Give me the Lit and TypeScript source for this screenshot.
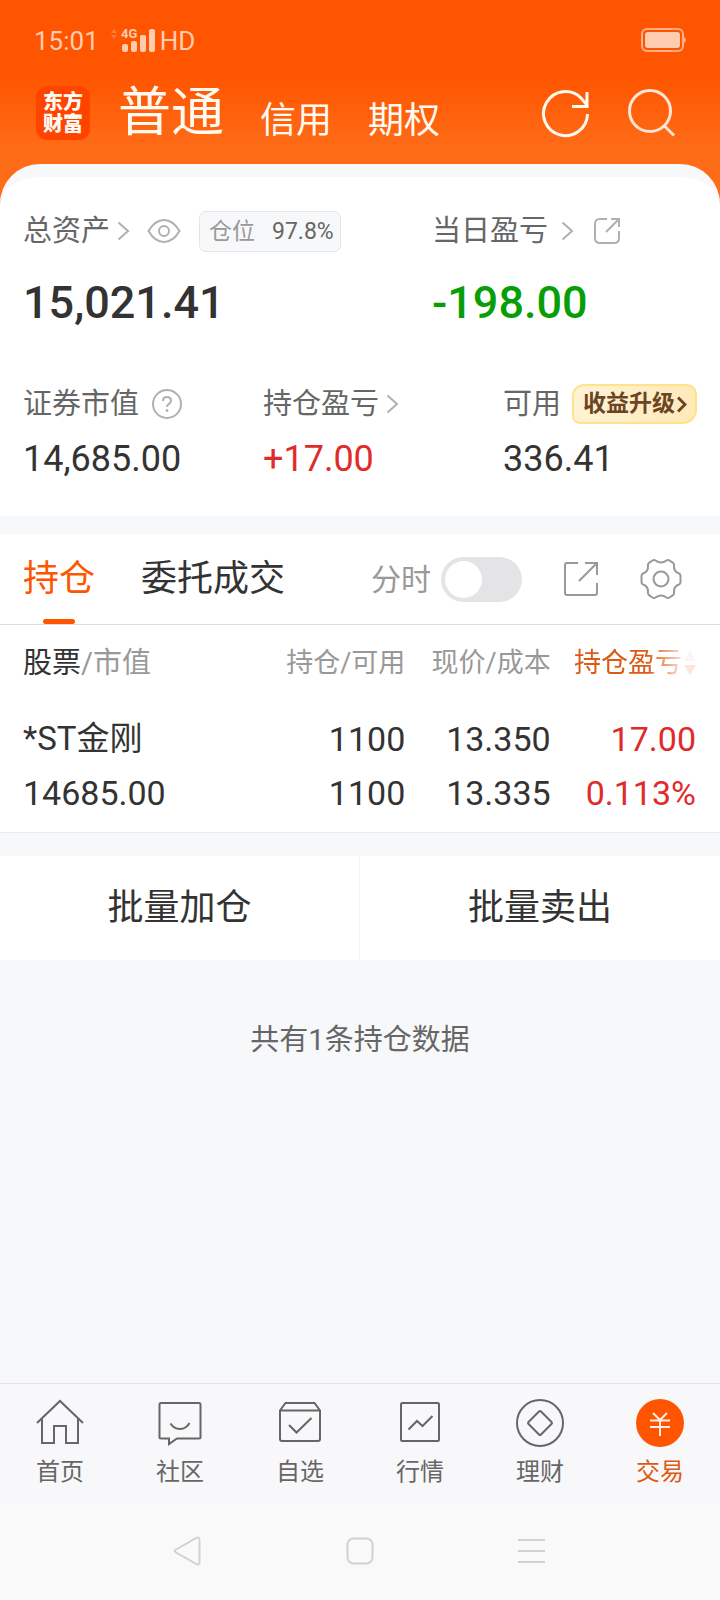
import { LitElement, html, css, svg } from "lit";
import { customElement, property, state } from "lit/decorators.js";
import { classMap } from "lit/directives/class-map.js";

interface Holding {
  name: string;
  marketValue: string;
  quantity: string;
  available: string;
  price: string;
  cost: string;
  profit: string;
  ratio: string;
}

const HOLDINGS: Holding[] = [
  {
    name: "*ST金刚",
    marketValue: "14685.00",
    quantity: "1100",
    available: "1100",
    price: "13.350",
    cost: "13.335",
    profit: "17.00",
    ratio: "0.113%",
  },
];

const chevron = html`<svg class="chevron" width="13" height="20" viewBox="0 0 13 20" aria-hidden="true">
  <path d="M1.5 1.5 L11 10 L1.5 18.5" fill="none" stroke="currentColor" stroke-width="2" />
</svg>`;

@customElement("status-bar")
class StatusBar extends LitElement {
  static styles = css`
    :host {
      display: flex;
      align-items: center;
      height: 80px;
      padding: 0 34px;
      color: #ffccb0;
      font-size: 26px;
      line-height: 32px;
    }
    .time {
      padding-top: 2px;
    }
    .signal {
      margin-left: 11px;
    }
    .hd {
      margin-left: 4px;
      padding-top: 1px;
    }
    .battery {
      margin-left: auto;
    }
    .tiny {
      font: 700 13px Roboto, sans-serif;
    }
  `;

  render() {
    return html`
      <span class="time">15:01</span>
      <svg class="signal" width="46" height="26" viewBox="0 0 46 26" fill="currentColor" aria-hidden="true">
        <path d="M1 6 L4 2 L7 6z M1 8 L4 12 L7 8z" opacity=".35" />
        <text class="tiny" x="11" y="11">4G</text>
        <rect x="12" y="17" width="6" height="8" rx="2" />
        <rect x="21" y="14" width="6" height="11" rx="2" />
        <rect x="30" y="8" width="6" height="17" rx="2" />
        <rect x="39" y="2" width="6" height="23" rx="2" />
      </svg>
      <span class="hd">HD</span>
      <svg class="battery" width="45" height="24" viewBox="0 0 45 24" aria-label="电量">
        <rect x="1" y="1" width="41" height="22" rx="5" fill="none" stroke="#ffb088" stroke-width="2" />
        <rect x="4" y="4" width="35" height="16" rx="3" fill="#ffccb0" />
        <path d="M43 9 q2 1 2 3 t-2 3z" fill="#ffb088" />
      </svg>
    `;
  }
}

@customElement("app-header")
class AppHeader extends LitElement {
  static styles = css`
    :host {
      display: flex;
      align-items: center;
      height: 84px;
      padding: 0 43px 18px 36px;
      box-sizing: border-box;
      color: #fffaf2;
    }
    button {
      border: 0;
      padding: 0;
      background: none;
      color: inherit;
      font: inherit;
      cursor: pointer;
    }
    .logo {
      display: grid;
      place-content: center;
      width: 54px;
      height: 54px;
      border-radius: 11px;
      background: #ff4400;
      font-size: 20px;
      font-weight: 900;
      line-height: 22px;
      text-align: center;
    }
    .accounts {
      display: flex;
      align-items: flex-end;
      gap: 36px;
      margin-left: 28px;
    }
    .account {
      font-size: 36px;
      line-height: 44px;
    }
    .account.current {
      font-size: 53px;
      line-height: 60px;
    }
    .actions {
      display: flex;
      gap: 36px;
      margin-left: auto;
    }
    .actions button {
      display: flex;
    }
  `;

  render() {
    return html`
      <div class="logo"><span>东方</span><span>财富</span></div>
      <div class="accounts">
        <button class="account current">普通</button>
        <button class="account">信用</button>
        <button class="account">期权</button>
      </div>
      <div class="actions">
        <button aria-label="刷新">
          <svg width="50" height="50" viewBox="0 0 50 50" fill="none" stroke="currentColor" stroke-width="3">
            <path d="M46.500 26 A22 22 0 1 1 40 10 L46 17" />
            <path d="M46 4 V18.500 H31" />
          </svg>
        </button>
        <button aria-label="搜索">
          <svg width="50" height="50" viewBox="0 0 50 50" fill="none" stroke="#ffe6d4" stroke-width="3">
            <circle cx="23" cy="23" r="20.500" />
            <path d="M37 37.500 L47 47.500" />
          </svg>
        </button>
      </div>
    `;
  }
}

@customElement("asset-summary")
class AssetSummary extends LitElement {
  static styles = css`
    :host {
      display: block;
      border-top: 13px solid #f7f8fa;
      border-radius: 40px 40px 0 0;
      background: #fff;
      padding: 33px 0 37px;
      color: #333;
    }
    button {
      border: 0;
      padding: 0;
      background: none;
      color: inherit;
      font: inherit;
      cursor: pointer;
    }
    .main {
      display: grid;
      grid-template-columns: 60% 40%;
    }
    .main > :first-child,
    .details > div {
      padding-left: 23px;
    }
    .details {
      display: grid;
      grid-template-columns: repeat(3, 1fr);
      margin-top: 53px;
    }
    .label {
      display: flex;
      align-items: center;
      height: 42px;
      color: #666;
      font-size: 29px;
      line-height: 42px;
      white-space: nowrap;
    }
    .link {
      display: flex;
      align-items: center;
      gap: 7px;
    }
    .link.wide {
      gap: 13px;
    }
    .chevron,
    .icon {
      color: #b0b0b0;
    }
    .icon {
      display: flex;
      margin-left: 17px;
    }
    .help {
      display: flex;
      margin-left: 12px;
      color: #b0b0b0;
    }
    .position {
      display: flex;
      gap: 17px;
      margin-left: 18px;
      padding: 0 6px 0 9px;
      border: 1px solid #e4e5e8;
      border-radius: 7px;
      background: #f7f8fa;
      font-size: 23px;
      line-height: 39px;
    }
    .position span {
      color: #999;
    }
    .value {
      margin-top: 14px;
      font-size: 36px;
      line-height: 40px;
    }
    .value.large {
      margin-top: 22px;
      font-size: 45px;
      font-weight: 500;
      line-height: 58px;
      height: 56px;
    }
    .down {
      color: #089e08;
    }
    .up {
      color: #e02b2b;
    }
    .upgrade {
      display: flex;
      align-items: center;
      gap: 2px;
      margin-left: 11px;
      padding: 0 8px 0 9px;
      height: 40px;
      border: 2px solid #fde48a;
      border-radius: 12px 10px 14px 8px;
      background: linear-gradient(100deg, #fff3d6, #ffe9b8);
      color: #6b4423;
      font-size: 23px;
      font-weight: 700;
      line-height: 36px;
    }
  `;

  @state() private masked = false;

  private show(value: string) {
    return this.masked ? "****" : value;
  }

  render() {
    return html`
      <div class="main">
        <div>
          <div class="label">
            <button class="link">总资产 ${chevron}</button>
            <button class="icon" aria-label="隐藏金额" @click=${() => (this.masked = !this.masked)}>
              <svg width="34" height="26" viewBox="0 0 34 26" fill="none" stroke="currentColor" stroke-width="2">
                <path d="M1.500 13 Q8 2 17 2 T32.500 13 Q26 24 17 24 T1.500 13z" />
                <circle cx="17" cy="13" r="5" />
              </svg>
            </button>
            <div class="position"><span>仓位</span>97.8%</div>
          </div>
          <div class="value large">${this.show("15,021.41")}</div>
        </div>
        <div>
          <div class="label">
            <button class="link wide">当日盈亏 ${chevron}</button>
            <button class="icon" aria-label="分享">
              <svg width="32" height="30" viewBox="0 0 32 30" fill="none" stroke="currentColor" stroke-width="2">
                <path d="M16 3 H9 Q4 3 4 8 V22 Q4 27 9 27 H23 Q28 27 28 22 V15" />
                <path d="M15 16 L27.500 3.500 M20 3 H28 V11" />
              </svg>
            </button>
          </div>
          <div class="value large down">${this.show("-198.00")}</div>
        </div>
      </div>
      <div class="details">
        <div>
          <div class="label">
            证券市值
            <button class="help" aria-label="说明">
              <svg width="32" height="32" viewBox="0 0 32 32" fill="none" stroke="currentColor" stroke-width="2">
                <circle cx="16" cy="16" r="14" />
                <path d="M12 13 V12.500 Q12 9 16 9 T20 12.500 Q20 14.500 18 15.800 T16 19" />
                <circle cx="16" cy="22.500" r="1" fill="currentColor" stroke-width="1" />
              </svg>
            </button>
          </div>
          <div class="value">${this.show("14,685.00")}</div>
        </div>
        <div>
          <div class="label"><button class="link">持仓盈亏 ${chevron}</button></div>
          <div class="value up">${this.show("+17.00")}</div>
        </div>
        <div>
          <div class="label">
            可用
            <button class="upgrade">
              收益升级
              <svg width="10" height="17" viewBox="0 0 10 17" fill="none" stroke="currentColor" stroke-width="3">
                <path d="M1 1.500 L8 8.500 L1 15.500" />
              </svg>
            </button>
          </div>
          <div class="value">${this.show("336.41")}</div>
        </div>
      </div>
    `;
  }
}

@customElement("holdings-panel")
class HoldingsPanel extends LitElement {
  static styles = css`
    :host {
      display: block;
      background: #fff;
      border-bottom: 1px solid #ececee;
      color: #333;
    }
    button {
      border: 0;
      padding: 0;
      background: none;
      color: inherit;
      font: inherit;
      cursor: pointer;
    }
    .toolbar {
      display: flex;
      align-items: center;
      height: 90px;
      padding: 0 38px 0 23px;
      border-bottom: 1px solid #dedee0;
    }
    .tabs {
      display: flex;
      gap: 46px;
      height: 100%;
      font-size: 36px;
      line-height: 44px;
    }
    .tab {
      position: relative;
    }
    .tab.active {
      color: #ff5500;
    }
    .tab.active::after {
      content: "";
      position: absolute;
      left: 50%;
      bottom: 0;
      width: 32px;
      height: 5px;
      margin-left: -16px;
      border-radius: 3px;
      background: #ff5500;
    }
    .tools {
      display: flex;
      align-items: center;
      gap: 41px;
      margin-left: auto;
      color: #999;
    }
    .tools button {
      display: flex;
    }
    .switch {
      display: flex;
      align-items: center;
      gap: 10px;
      font-size: 30px;
      line-height: 45px;
    }
    .switch input {
      appearance: none;
      display: flex;
      align-items: center;
      width: 81px;
      height: 45px;
      margin: 0;
      padding: 0 4px;
      border-radius: 23px;
      background: #e4e4e6;
    }
    .switch input::before {
      content: "";
      width: 37px;
      height: 37px;
      border-radius: 50%;
      background: #fff;
    }
    .switch input:checked {
      justify-content: flex-end;
      background: #ff5500;
    }
    .wrap {
      padding: 0 24px 0 23px;
    }
    table {
      width: 100%;
      border-collapse: collapse;
      table-layout: fixed;
    }
    th,
    td {
      padding: 0;
      text-align: right;
      white-space: nowrap;
    }
    th:first-child,
    td:first-child {
      text-align: left;
    }
    th {
      height: 76px;
      color: #999;
      font-size: 27px;
      font-weight: 400;
      line-height: 40px;
    }
    th:first-child {
      font-size: 29px;
    }
    th b {
      color: #333;
      font-weight: 400;
    }
    .num {
      width: 21.6%;
    }
    td {
      padding: 11px 0 12px;
      font-size: 34px;
      line-height: 54px;
    }
    .name {
      font-size: 33px;
    }
    .up {
      color: #e02b2b;
    }
    .sort {
      display: inline-flex;
      align-items: center;
      gap: 2px;
      color: #dd5a14;
      mask-image: linear-gradient(90deg, #000 60%, rgba(0, 0, 0, 0.15) 90%);
    }
  `;

  @property({ attribute: false }) holdings: Holding[] = [];
  @state() private tab = "持仓";

  render() {
    return html`
      <div class="toolbar">
        <div class="tabs">
          ${["持仓", "委托成交"].map(
            (name) => html`<button
              class=${classMap({ tab: true, active: name === this.tab })}
              @click=${() => (this.tab = name)}
            >${name}</button>`
          )}
        </div>
        <div class="tools">
          <label class="switch">分时<input type="checkbox" /></label>
          <button aria-label="分享">
            <svg width="36" height="36" viewBox="0 0 36 36" fill="none" stroke="currentColor" stroke-width="2">
              <path d="M15 2 H4 Q2 2 2 4 V32 Q2 34 4 34 H32 Q34 34 34 32 V22" />
              <path d="M16 20 L33 3 M22 2 H34 V14" />
            </svg>
          </button>
          <button aria-label="设置">
            <svg width="42" height="42" viewBox="0 0 42 42" fill="none" stroke="currentColor" stroke-width="2" stroke-linejoin="round">
              <path d="M12.500 2.500 Q14 1.500 15.500 2.500 Q21 6.500 26.500 2.500 Q28 1.500 29.500 2.500 L33 4.800 Q34 5.500 34 7 Q33.500 14 39 15.500 Q40.500 16 40.500 18 V24 Q40.500 26 39 26.500 Q33.500 28 34 35 Q34 36.500 33 37.200 L29.500 39.500 Q28 40.500 26.500 39.500 Q21 35.500 15.500 39.500 Q14 40.500 12.500 39.500 L9 37.200 Q8 36.500 8 35 Q8.500 28 3 26.500 Q1.500 26 1.500 24 V18 Q1.500 16 3 15.500 Q8.500 14 8 7 Q8 5.500 9 4.800z" />
              <circle cx="21" cy="21" r="7.500" />
            </svg>
          </button>
        </div>
      </div>
      <div class="wrap">
        <table>
          <thead>
            <tr>
              <th scope="col"><b>股票</b>/市值</th>
              <th scope="col" class="num">持仓/可用</th>
              <th scope="col" class="num">现价/成本</th>
              <th scope="col" class="num">
                <button class="sort">
                  持仓盈亏
                  <svg width="12" height="26" viewBox="0 0 12 26" aria-hidden="true">
                    <path d="M0 11 L6 1 L12 11z" fill="#c4c4c4" />
                    <path d="M0 15 L6 25 L12 15z" fill="#ff5500" />
                  </svg>
                </button>
              </th>
            </tr>
          </thead>
          <tbody>
            ${this.holdings.map(
              (h) => html`<tr>
                <td><div class="name">${h.name}</div><div>${h.marketValue}</div></td>
                <td><div>${h.quantity}</div><div>${h.available}</div></td>
                <td><div>${h.price}</div><div>${h.cost}</div></td>
                <td class="up"><div>${h.profit}</div><div>${h.ratio}</div></td>
              </tr>`
            )}
          </tbody>
        </table>
      </div>
    `;
  }
}

const NAV_ITEMS = [
  {
    label: "首页",
    icon: svg`<path d="M1 24 L24 2 L47 24 M6 20 V44 H18 V27 H30 V44 H42 V20" />`,
  },
  {
    label: "社区",
    icon: svg`<path d="M5 4 H43 Q44.500 4 44.500 5.500 V38 Q44.500 39.500 43 39.500 H21 L13 45 V39.500 H5 Q3.500 39.500 3.500 38 V5.500 Q3.500 4 5 4z" /><path d="M14.500 24.500 Q18 30 24 30 T33.500 24" />`,
  },
  {
    label: "自选",
    icon: svg`<path d="M4 11.500 L9.500 4 H38.500 L44 11.500 V40 Q44 42 42 42 H6 Q4 42 4 40z M4 11.500 H44" /><path d="M13 26 L20.500 33.500 L35.500 19" />`,
  },
  {
    label: "行情",
    icon: svg`<rect x="5" y="4" width="38" height="38" rx="1.500" /><path d="M12.500 30.500 L21 22 L26.500 27 L36.500 17" />`,
  },
  {
    label: "理财",
    icon: svg`<circle cx="24" cy="24" r="23" /><path d="M23 12.500 Q24 11.500 25 12.500 L35.500 23 Q36.500 24 35.500 25 L25 35.500 Q24 36.500 23 35.500 L12.500 25 Q11.500 24 12.500 23z" />`,
  },
  {
    label: "交易",
    icon: svg`<circle cx="24" cy="24" r="24" fill="#ff5500" stroke="none" /><path stroke="#ffefe2" d="M17 14 L24 21 L31 14 M14 21.500 H34 M14 28 H34 M24 21 V37" />`,
  },
];

@customElement("bottom-nav")
class BottomNav extends LitElement {
  static styles = css`
    :host {
      display: block;
      border-top: 1px solid #e2e3e6;
      background: #f8f8fa;
    }
    nav {
      display: grid;
      grid-template-columns: repeat(6, 1fr);
    }
    .item {
      display: flex;
      flex-direction: column;
      align-items: center;
      gap: 9px;
      padding: 15px 0 14px;
      color: #666;
      font-size: 24px;
      line-height: 32px;
      text-decoration: none;
    }
    .item.active {
      color: #dd5a14;
    }
  `;

  @property() current = "交易";

  render() {
    return html`<nav>
      ${NAV_ITEMS.map(
        (item) => html`<a
          href="#"
          class=${classMap({ item: true, active: item.label === this.current })}
        >
          <svg width="48" height="48" viewBox="0 0 48 48" fill="none" stroke="currentColor" stroke-width="2" aria-hidden="true">${item.icon}</svg>
          <span>${item.label}</span>
        </a>`
      )}
    </nav>`;
  }
}

@customElement("system-keys")
class SystemKeys extends LitElement {
  static styles = css`
    :host {
      display: flex;
      align-items: center;
      justify-content: center;
      gap: 142px;
      height: 98px;
      background: #f9f9f9;
    }
    button {
      display: flex;
      border: 0;
      padding: 0;
      background: none;
    }
  `;

  render() {
    const keys = [
      { label: "返回", shape: svg`<path d="M3 13.500 Q0.500 15 3 16.500 L23.500 28 Q26.500 29.500 26.500 26 V4 Q26.500 0.500 23.500 2z" />` },
      { label: "主屏幕", shape: svg`<rect x="2.500" y="2.500" width="25" height="25" rx="6" />` },
      { label: "菜单", shape: svg`<path d="M1 4 H28 M1 15 H28 M1 26 H28" />` },
    ];
    return html`${keys.map(
      (key) => html`<button aria-label=${key.label}>
        <svg width="30" height="30" viewBox="0 0 30 30" fill="none" stroke="#d2d2d2" stroke-width="2">${key.shape}</svg>
      </button>`
    )}`;
  }
}

@customElement("app-root")
class AppRoot extends LitElement {
  static styles = css`
    :host {
      display: flex;
      flex-direction: column;
      min-height: 100vh;
      background: #f7f8fa;
      color: #333;
      font-family: Roboto, "Noto Sans CJK SC", sans-serif;
    }
    .top {
      background: linear-gradient(#ff5500 75px, #ff6c18 150px, #ff6c18);
    }
    .holdings {
      margin-top: 18px;
    }
    .batch {
      display: grid;
      grid-template-columns: 1fr 1fr;
      margin-top: 23px;
      background: #fff;
    }
    .batch button {
      height: 104px;
      border: 0;
      padding: 0;
      background: none;
      color: inherit;
      font: inherit;
      font-size: 36px;
      line-height: 44px;
    }
    .batch button:first-child {
      border-right: 1px solid #f2f3f5;
    }
    .count {
      margin: 60px 0;
      color: #666;
      font-size: 29px;
      line-height: 40px;
      text-align: center;
    }
    .nav {
      margin-top: auto;
    }
  `;

  render() {
    return html`
      <div class="top">
        <status-bar></status-bar>
        <app-header></app-header>
        <asset-summary></asset-summary>
      </div>
      <holdings-panel class="holdings" .holdings=${HOLDINGS}></holdings-panel>
      <div class="batch">
        <button>批量加仓</button>
        <button>批量卖出</button>
      </div>
      <p class="count">共有${HOLDINGS.length}条持仓数据</p>
      <bottom-nav class="nav"></bottom-nav>
      <system-keys></system-keys>
    `;
  }
}
